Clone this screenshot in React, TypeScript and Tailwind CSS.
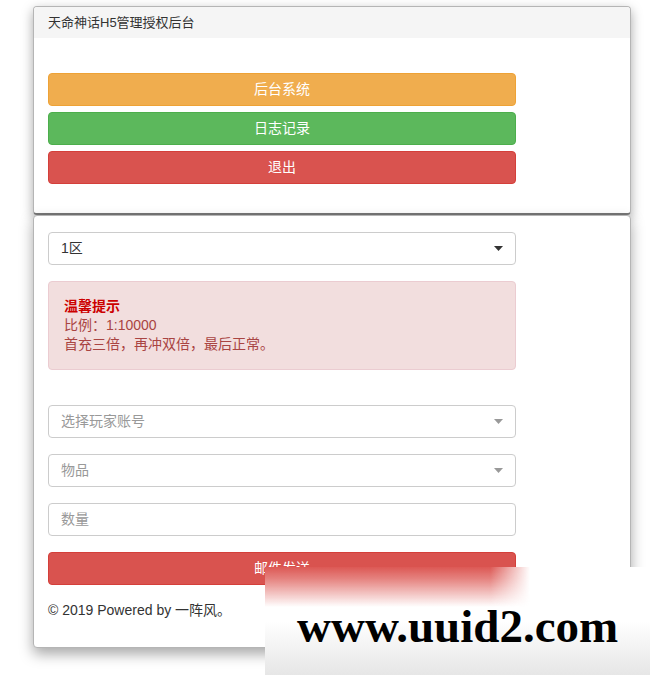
import React from "react";

const Caret = ({ color }: { color: string }) => (
  <svg width="9" height="5" viewBox="0 0 9 5" className="shrink-0">
    <path d="M0 0 L9 0 L4.5 5 Z" fill={color} />
  </svg>
);

export default function App() {
  const font = { fontFamily: '"Liberation Sans", Arial, "Noto Sans CJK SC", sans-serif' };
  return (
    <div className="relative w-[655px] h-[680px] bg-white overflow-hidden" style={font}>
      <div className="pl-[33px] pt-[6px] w-[631px]">
        {/* Panel 1 */}
        <div className="bg-white border border-[#b5b5b5] border-b-[#777] border-b-2 rounded-[4px] shadow-[0_4px_12px_rgba(0,0,0,0.35)] overflow-hidden">
          <div className="h-[31px] bg-[#f5f5f5] px-[14px] flex items-center text-[13px] text-[#333]">
            天命神话H5管理授权后台
          </div>
          <div className="px-[14px] pt-[35px] pb-[29px] flex flex-col gap-[6px]">
            <div className="w-[468px] h-[33px] rounded-[4px] bg-[#f0ad4e] border border-[#eea236] flex items-center justify-center text-white text-[14px]">后台系统</div>
            <div className="w-[468px] h-[33px] rounded-[4px] bg-[#5cb85c] border border-[#4cae4c] flex items-center justify-center text-white text-[14px]">日志记录</div>
            <div className="w-[468px] h-[33px] rounded-[4px] bg-[#d9534f] border border-[#d43f3a] flex items-center justify-center text-white text-[14px]">退出</div>
          </div>
        </div>
        {/* Panel 2 */}
        <div className="bg-white border border-[#b5b5b5] rounded-[4px] shadow-[0_6px_14px_rgba(0,0,0,0.35)] px-[14px] pt-[16px] pb-[27px]">
          <div className="w-[468px] h-[33px] rounded-[4px] border border-[#ccc] flex items-center justify-between pl-[12px] pr-[12px] text-[14px] text-[#333]">
            <span>1区</span>
            <Caret color="#333" />
          </div>
          <div className="mt-[16px] w-[468px] rounded-[4px] bg-[#f2dede] border border-[#ebccd1] p-[15px] text-[14px] leading-[19px] text-[#a94442]">
            <div className="font-bold text-[#cc0000]">温馨提示</div>
            <div>比例：1:10000</div>
            <div>首充三倍，再冲双倍，最后正常。</div>
          </div>
          <div className="mt-[35px] flex flex-col gap-[16px]">
            <div className="w-[468px] h-[33px] rounded-[4px] border border-[#ccc] flex items-center justify-between pl-[12px] pr-[12px] text-[14px] text-[#999]">
              <span>选择玩家账号</span>
              <Caret color="#999" />
            </div>
            <div className="w-[468px] h-[33px] rounded-[4px] border border-[#ccc] flex items-center justify-between pl-[12px] pr-[12px] text-[14px] text-[#999]">
              <span>物品</span>
              <Caret color="#999" />
            </div>
            <div className="w-[468px] h-[33px] rounded-[4px] border border-[#ccc] flex items-center pl-[12px] text-[14px] text-[#999]">
              <span>数量</span>
            </div>
            <div className="w-[468px] h-[33px] rounded-[4px] bg-[#d9534f] border border-[#d43f3a] flex items-center justify-center text-white text-[14px]">邮件发送</div>
          </div>
          <div className="mt-[15px] text-[14px] text-[#333] leading-[20px]">© 2019 Powered by 一阵风。</div>
        </div>
      </div>
      {/* Watermark overlay */}
      <div className="absolute left-[265px] top-[567px] w-[385px] h-[108px] bg-[linear-gradient(to_bottom,#ffffff_0%,#ffffff_50%,#e6e6e6_100%)] flex items-center overflow-hidden">
        <div className="absolute left-0 top-0 w-[265px] h-[40px] bg-[linear-gradient(to_bottom,#dc5854_0%,rgba(225,110,106,0.85)_30%,rgba(255,255,255,0)_100%)] [mask-image:linear-gradient(to_right,black_85%,transparent_100%)]" />
        <span className="relative text-[47px] font-bold text-black leading-none pl-[32px] pt-[10px]" style={{ fontFamily: '"Liberation Serif", "Times New Roman", serif' }}>
          www.uuid2.com
        </span>
      </div>
    </div>
  );
}
